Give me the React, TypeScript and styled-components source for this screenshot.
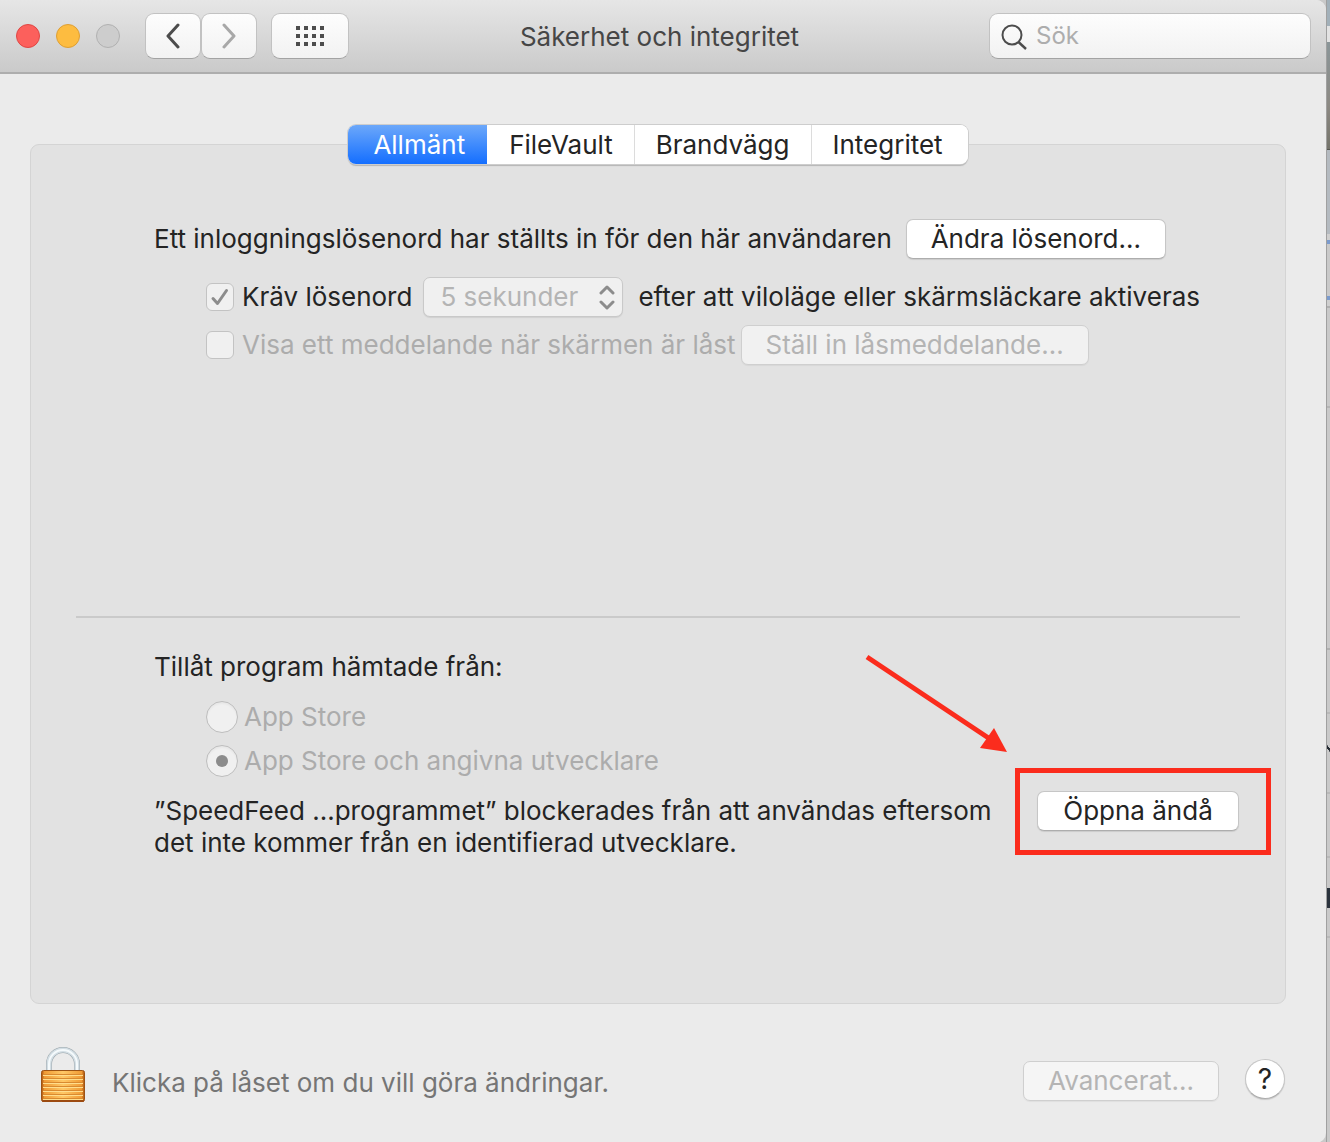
import React from 'react';
import styled, { createGlobalStyle } from 'styled-components';

const GlobalStyle = createGlobalStyle`
  *, *::before, *::after { box-sizing: border-box; }
  body {
    margin: 0;
    background: #c9c9c9;
    color: #242424;
    font-family: Inter, "Liberation Sans", sans-serif;
    font-size: 26px;
    line-height: 32px;
  }
  button, input, select { font: inherit; color: inherit; margin: 0; }
`;

const Desktop = styled.div`
  display: grid;
  grid-template-columns: minmax(0, 1fr) 4px;
  min-height: 100vh;
  background: #c9c9c9;
`;

const Window = styled.main`
  display: flex;
  flex-direction: column;
  background: #ebebeb;
  border-radius: 0 10px 10px 0;
`;

const Behind = styled.div`
  display: flex;
  flex-direction: column;
  border-left: 1px solid #a0a0a0;
`;

const Strip = styled.div<{ $h: number; $bg: string }>`
  flex: none;
  height: ${(p) => p.$h}px;
  background: ${(p) => p.$bg};
`;

const TitleBar = styled.header`
  display: grid;
  grid-template-columns: minmax(0, 1fr) auto minmax(0, 1fr);
  align-items: center;
  height: 74px;
  padding: 0 15px 0 16px;
  background: linear-gradient(#e6e6e6, #cacaca);
  border-bottom: 2px solid #adadad;
  border-radius: 0 10px 0 0;
`;

const TitleControls = styled.div`
  display: flex;
  align-items: center;
`;

const Lights = styled.div`
  display: flex;
  gap: 16px;
  margin-right: 25px;
`;

const Light = styled.button<{ $fill: string; $edge: string }>`
  width: 24px;
  height: 24px;
  padding: 0;
  border-radius: 50%;
  border: 1px solid ${(p) => p.$edge};
  background: ${(p) => p.$fill};
`;

const ToolButton = styled.button<{ $wide?: boolean }>`
  display: grid;
  place-items: center;
  width: ${(p) => (p.$wide ? 78 : 56)}px;
  height: 46px;
  padding: 0;
  margin-left: ${(p) => (p.$wide ? 14 : 0)}px;
  border: 1px solid #c2c2c2;
  border-bottom-color: #a3a3a3;
  border-radius: 9px;
  background: linear-gradient(#fdfdfd, #f2f2f2);
`;

const Title = styled.h1`
  margin: 0;
  padding: 2px 8px 0 0;
  font-size: 26px;
  font-weight: 400;
  color: #464646;
`;

const Search = styled.label`
  justify-self: end;
  display: flex;
  align-items: center;
  gap: 8px;
  width: 322px;
  height: 46px;
  padding: 0 10px;
  border: 1px solid #c2c2c2;
  border-bottom-color: #a3a3a3;
  border-radius: 9px;
  background: linear-gradient(#fdfdfd, #f2f2f2);

  input {
    flex: 1;
    min-width: 0;
    padding: 0;
    border: 0;
    outline: 0;
    background: transparent;
    font-size: 24px;
  }
  input::placeholder { color: #adadad; opacity: 1; }
`;

const Content = styled.div`
  flex: 1;
  display: flex;
  flex-direction: column;
  padding: 70px 40px 0 30px;
`;

const Panel = styled.section`
  min-height: 860px;
  border: 1px solid #d4d4d4;
  border-radius: 9px;
  background: #e2e2e2;
`;

const Tabs = styled.div`
  display: flex;
  width: fit-content;
  margin: -20px auto 55px;
  border-radius: 8px;
  background: #fff;
  box-shadow: 0 0 0 1px #cdcdcd, 0 2px 1px #b5b5b5;
  overflow: hidden;
`;

const Tab = styled.button<{ $active?: boolean }>`
  height: 39px;
  padding: 0 21px;
  border: 0;
  border-left: 1px solid #dcdcdc;
  background: #fff;

  &:last-child { padding-right: 25px; }

  ${(p) =>
    p.$active &&
    `
    padding: 0 22px 0 25px;
    border-left: 0;
    background: linear-gradient(#6ca8fa, #146eff);
    color: #fff;
    & + button { border-left-color: #fff; }
  `}
`;

const Group = styled.div<{ $top?: number }>`
  padding: ${(p) => p.$top ?? 0}px 46px 0 123px;
`;

const Row = styled.div<{ $gap?: number; $indent?: boolean; $after?: number }>`
  display: flex;
  align-items: center;
  gap: ${(p) => p.$gap ?? 0}px;
  min-height: 40px;
  margin-bottom: ${(p) => p.$after ?? 0}px;
  padding-left: ${(p) => (p.$indent ? 52 : 0)}px;
  white-space: nowrap;
`;

const PushButton = styled.button<{ $w: number }>`
  flex: none;
  width: ${(p) => p.$w}px;
  height: 40px;
  padding: 0;
  border: 1px solid #c6c6c6;
  border-bottom-color: #adadad;
  border-radius: 7px;
  background: #fff;
  box-shadow: 0 1px 1px rgba(0, 0, 0, 0.1);

  &:disabled {
    background: rgba(255, 255, 255, 0.5);
    border-color: #cfcfcf;
    box-shadow: 0 1px 1px rgba(0, 0, 0, 0.05);
    color: #b4b4b4;
  }
`;

const Option = styled.label<{ $dim?: boolean; $gap: number }>`
  display: flex;
  align-items: center;
  gap: ${(p) => p.$gap}px;
  color: ${(p) => (p.$dim ? '#acacac' : '#242424')};
`;

const Check = styled.input`
  appearance: none;
  width: 28px;
  height: 28px;
  border: 1px solid #c3c3c3;
  border-radius: 6px;
  background: #f0f0f0;
`;

const CheckBox = styled.span`
  display: grid;
  > * { grid-area: 1 / 1; }
  svg { pointer-events: none; }
`;

const Radio = styled.input`
  appearance: none;
  display: grid;
  place-items: center;
  width: 32px;
  height: 32px;
  border: 1px solid #bdbdbd;
  border-radius: 50%;
  background: #f0f0f0;
  box-shadow: inset 0 2px 2px rgba(0, 0, 0, 0.04);

  &:checked::before {
    content: "";
    width: 12px;
    height: 12px;
    border-radius: 50%;
    background: #8c8c8c;
  }
`;

const PopUp = styled.span`
  display: grid;
  width: 200px;
  margin: 0 15px 0 11px;
  > * { grid-area: 1 / 1; }
  svg { place-self: center end; margin-right: 7px; pointer-events: none; }
`;

const Select = styled.select`
  appearance: none;
  width: 100%;
  height: 40px;
  padding: 0 16px;
  border: 1px solid #c9c9c9;
  border-radius: 7px;
  background: #f0f0f0;
  box-shadow: 0 1px 1px rgba(0, 0, 0, 0.08);
  &:disabled { color: #b4b4b4; opacity: 1; }
`;

const Divider = styled.hr`
  height: 2px;
  margin: 251px 45px 0;
  border: 0;
  background: #cacaca;
`;

const Heading = styled.p`
  margin: 0 0 18px;
`;

const Radios = styled.div`
  display: grid;
  gap: 12px;
  padding-left: 52px;
  margin-bottom: 18px;
`;

const Blocked = styled.div`
  display: flex;
  justify-content: space-between;
  align-items: flex-start;
  white-space: nowrap;
  p { margin: 0; }
`;

const Highlighted = styled.div`
  position: relative;
  display: flex;
  margin-top: -4px;
`;

const RedFrame = styled.span`
  position: absolute;
  inset: -23px -32px -24px -22px;
  border: 5px solid #fb2c1d;
  pointer-events: none;
`;

const Arrow = styled.svg`
  position: absolute;
  right: 231px;
  bottom: 78px;
  pointer-events: none;
`;

const Footer = styled.footer`
  display: flex;
  align-items: center;
  padding: 43px 1px 40px 11px;
`;

const LockButton = styled.button`
  display: flex;
  padding: 0;
  border: 0;
  background: none;
`;

const Hint = styled.span`
  flex: 1;
  margin: 16px 0 0 27px;
  color: #757575;
`;

const Actions = styled.div`
  display: flex;
  align-items: center;
  gap: 26px;
  margin-top: 12px;
`;

const Help = styled.button`
  width: 40px;
  height: 40px;
  margin-top: -4px;
  padding: 0;
  border: 1px solid #c6c6c6;
  border-bottom-color: #adadad;
  border-radius: 50%;
  background: #fff;
  box-shadow: 0 1px 1px rgba(0, 0, 0, 0.15);
  font-size: 28px;
`;

const Chevron = ({ d, color }: { d: string; color: string }) => (
  <svg width="16" height="26" viewBox="0 0 16 26" fill="none" stroke={color} strokeWidth="3" strokeLinecap="round" strokeLinejoin="round" aria-hidden>
    <path d={d} />
  </svg>
);

const DotGrid = () => (
  <svg width="28" height="20" viewBox="0 0 28 20" fill="#4c4c4c" aria-hidden>
    {[0, 8, 16].map((y) => [0, 8, 16, 24].map((x) => <rect key={`${x}-${y}`} x={x} y={y} width="4" height="4" />))}
  </svg>
);

const Padlock = () => (
  <svg width="44" height="56" viewBox="0 0 44 56" fill="none" aria-hidden>
    <defs>
      <linearGradient id="brass" x1="0" x2="1" y1="0" y2="0">
        <stop offset="0" stopColor="#a8500c" />
        <stop offset="0.07" stopColor="#f09b35" />
        <stop offset="0.5" stopColor="#ffc866" />
        <stop offset="0.93" stopColor="#f09b35" />
        <stop offset="1" stopColor="#a8500c" />
      </linearGradient>
    </defs>
    <path d="M8 25V17a14 14 0 0 1 28 0v8" stroke="#98a3a9" strokeWidth="6" />
    <path d="M8 25V17a14 14 0 0 1 28 0v8" stroke="#d3dee4" strokeWidth="5" />
    <path d="M8 25V17a14 14 0 0 1 28 0v8" stroke="#f5fafc" strokeWidth="2" />
    <rect x="0.5" y="23.5" width="43" height="31" rx="2" fill="url(#brass)" stroke="#9c5314" />
    {[27, 31, 35, 39, 43, 47, 51].map((y) => (
      <g key={y}>
        <rect x="2" y={y} width="40" height="1" fill="#d98a30" />
        <rect x="2" y={y + 1} width="40" height="1" fill="#ffdd8c" />
      </g>
    ))}
    <rect x="1" y="53" width="42" height="2" rx="1" fill="#9c4a10" />
  </svg>
);

const backdrop: [number, string][] = [
  [26, '#a2b0b9'],
  [16, '#e3e3e3'],
  [107, 'linear-gradient(#8b9699, #8c8983 60%, #74736a)'],
  [1, '#55554f'],
  [84, '#b4bac0'],
  [6, '#cfcfcf'],
  [4, '#7b9bcd'],
  [52, '#c9c9c9'],
  [4, '#7b9bcd'],
  [6, '#cfcfcf'],
  [2, '#b0b0b0'],
  [98, '#c9c9c9'],
  [2, '#b5b5b5'],
  [240, '#c9c9c9'],
  [2, '#b0b0b0'],
  [62, '#c9c9c9'],
  [2, '#b9b9b9'],
  [30, '#c9c9c9'],
  [9, 'linear-gradient(50deg, #c9c9c9 35%, #272d35 36%, #272d35 64%, #c9c9c9 65%)'],
  [39, '#c9c9c9'],
  [2, '#b9b9b9'],
  [62, '#c9c9c9'],
  [2, '#b9b9b9'],
  [30, '#c9c9c9'],
  [20, '#2b333d'],
  [28, '#c9c9c9'],
  [2, '#b9b9b9'],
];

export default function App() {
  return (
    <>
      <GlobalStyle />
      <Desktop>
        <Window>
          <TitleBar>
            <TitleControls>
              <Lights>
                <Light $fill="#fc605c" $edge="#df4744" aria-label="Stäng" />
                <Light $fill="#fdbc40" $edge="#de9f34" aria-label="Minimera" />
                <Light $fill="#cdcdcd" $edge="#b1b1b1" aria-label="Zooma" disabled />
              </Lights>
              <ToolButton aria-label="Bakåt">
                <Chevron d="M13 2 3 13 13 24" color="#4c4c4c" />
              </ToolButton>
              <ToolButton aria-label="Framåt">
                <Chevron d="M3 2 13 13 3 24" color="#a8a8a8" />
              </ToolButton>
              <ToolButton $wide aria-label="Visa alla">
                <DotGrid />
              </ToolButton>
            </TitleControls>
            <Title>Säkerhet och integritet</Title>
            <Search>
              <svg width="28" height="28" viewBox="0 0 28 28" fill="none" stroke="#4c4c4c" strokeWidth="2" aria-hidden>
                <circle cx="12" cy="13" r="9.5" />
                <path d="M18.5 20 26 27" strokeWidth="2.4" />
              </svg>
              <input type="text" placeholder="Sök" aria-label="Sök" />
            </Search>
          </TitleBar>

          <Content>
            <Panel>
              <Tabs role="tablist">
                <Tab role="tab" aria-selected $active>Allmänt</Tab>
                <Tab role="tab">FileVault</Tab>
                <Tab role="tab">Brandvägg</Tab>
                <Tab role="tab">Integritet</Tab>
              </Tabs>

              <Group>
                <Row $gap={14} $after={18}>
                  <span>Ett inloggningslösenord har ställts in för den här användaren</span>
                  <PushButton $w={260}>Ändra lösenord...</PushButton>
                </Row>
                <Row $indent $after={8}>
                  <Option $gap={8}>
                    <CheckBox>
                      <Check type="checkbox" defaultChecked disabled />
                      <svg width="28" height="28" viewBox="0 0 28 28" fill="none" stroke="#8c8c8c" strokeWidth="3" strokeLinecap="round" strokeLinejoin="round" aria-hidden>
                        <path d="M7 15.5 11.5 20.5 20.5 7.5" />
                      </svg>
                    </CheckBox>
                    Kräv lösenord
                  </Option>
                  <PopUp>
                    <Select disabled aria-label="Fördröjning">
                      <option>5 sekunder</option>
                    </Select>
                    <svg width="18" height="26" viewBox="0 0 18 26" fill="none" stroke="#8c8c8c" strokeWidth="3" strokeLinecap="round" strokeLinejoin="round" aria-hidden>
                      <path d="M3 9 9 3 15 9M3 18 9 24 15 18" />
                    </svg>
                  </PopUp>
                  <span>efter att viloläge eller skärmsläckare aktiveras</span>
                </Row>
                <Row $indent $gap={5}>
                  <Option $dim $gap={8}>
                    <Check type="checkbox" disabled />
                    Visa ett meddelande när skärmen är låst
                  </Option>
                  <PushButton $w={348} disabled>Ställ in låsmeddelande...</PushButton>
                </Row>
              </Group>

              <Divider />

              <Group $top={33}>
                <Heading>Tillåt program hämtade från:</Heading>
                <Radios>
                  <Option $dim $gap={6}>
                    <Radio type="radio" name="source" disabled />
                    App Store
                  </Option>
                  <Option $dim $gap={6}>
                    <Radio type="radio" name="source" defaultChecked disabled />
                    App Store och angivna utvecklare
                  </Option>
                </Radios>
                <Blocked>
                  <p>
                    ”SpeedFeed ...programmet” blockerades från att användas eftersom
                    <br />
                    det inte kommer från en identifierad utvecklare.
                  </p>
                  <Highlighted>
                    <PushButton $w={202}>Öppna ändå</PushButton>
                    <RedFrame />
                    <Arrow width="144" height="100" viewBox="0 0 144 100" aria-hidden>
                      <path d="M3 4 126 86" stroke="#fb2c1d" strokeWidth="5" />
                      <path d="M143 99 116 95 130 75Z" fill="#fb2c1d" />
                    </Arrow>
                  </Highlighted>
                </Blocked>
              </Group>
            </Panel>

            <Footer>
              <LockButton aria-label="Lås">
                <Padlock />
              </LockButton>
              <Hint>Klicka på låset om du vill göra ändringar.</Hint>
              <Actions>
                <PushButton $w={196} disabled>Avancerat...</PushButton>
                <Help aria-label="Hjälp">?</Help>
              </Actions>
            </Footer>
          </Content>
        </Window>
        <Behind aria-hidden>
          {backdrop.map(([h, bg], i) => (
            <Strip key={i} $h={h} $bg={bg} />
          ))}
        </Behind>
      </Desktop>
    </>
  );
}
